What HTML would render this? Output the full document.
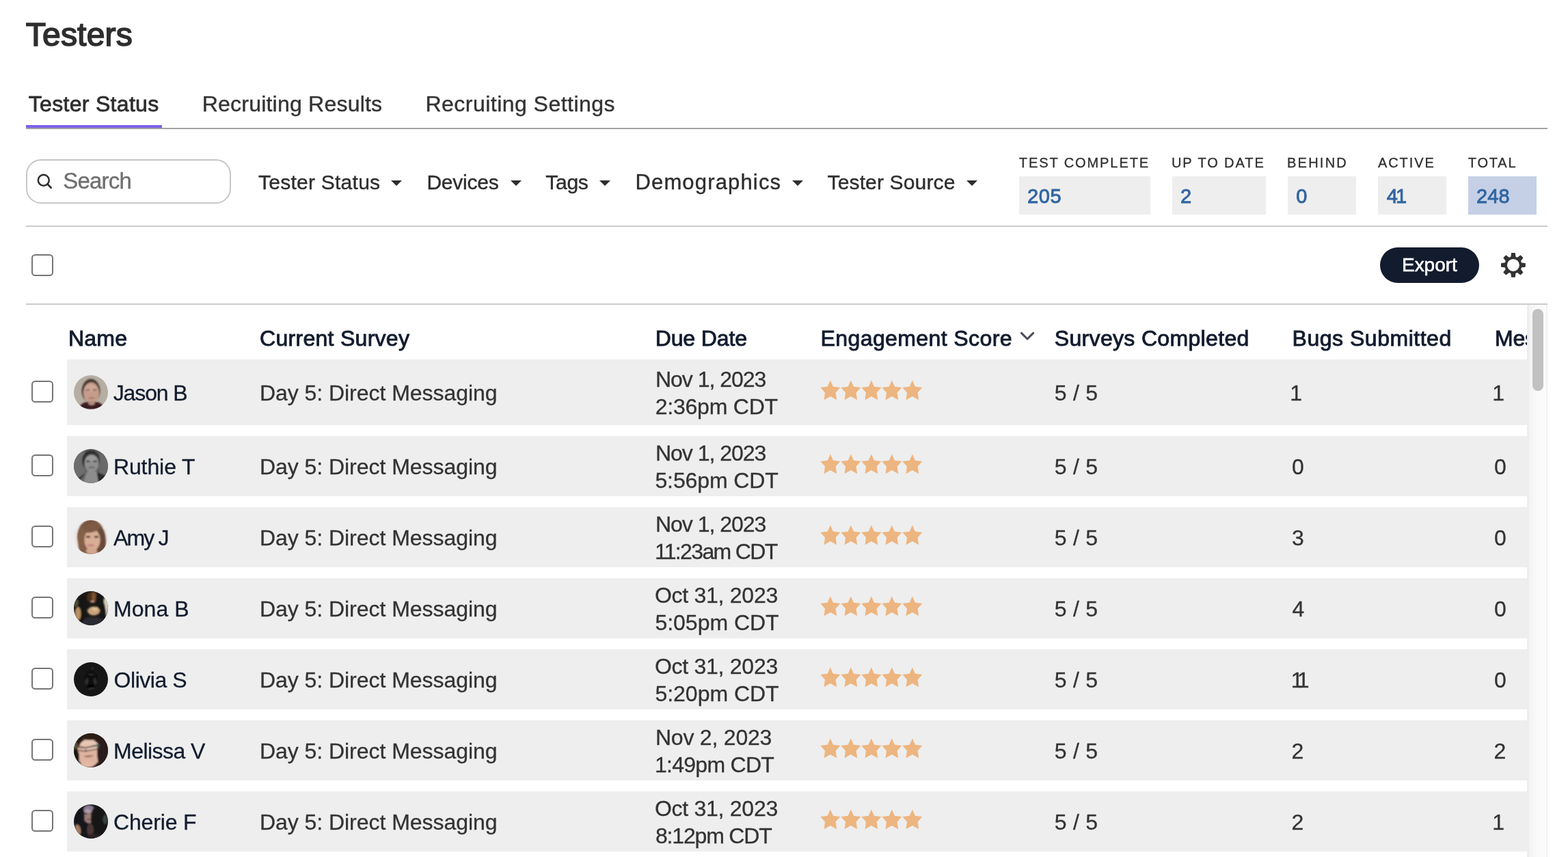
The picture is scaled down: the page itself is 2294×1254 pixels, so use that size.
<!DOCTYPE html>
<html lang="en">
<head>
<meta charset="utf-8">
<title>Testers</title>
<style>
html,body{margin:0;padding:0;background:#fff;}
body{width:2294px;height:1254px;overflow:hidden;position:relative;font-family:'Liberation Sans',sans-serif;}
.t{position:absolute;white-space:pre;line-height:1;font-kerning:normal;}
.a{position:absolute;}
.row{position:absolute;left:98px;width:2136px;background:#eeeeee;}
.cb{position:absolute;left:46px;width:28px;height:28px;border:2px solid #767676;border-radius:5.5px;background:#fff;}
.caret{position:absolute;width:0;height:0;border-left:8px solid transparent;border-right:8px solid transparent;border-top:8.5px solid #2e2e2e;}
.stat{position:absolute;top:258px;height:56px;background:#eeeeee;}
.av{position:absolute;left:108px;width:50px;height:50px;}
.avs{display:block;}
.stars{position:absolute;left:1200px;}
</style>
</head>
<body>
<div id="page" style="position:absolute;left:0;top:0;width:2294px;height:1254px;overflow:hidden;will-change:transform">

<div class="a" style="left:38px;top:187px;width:2226px;height:2px;background:#a3a3a3"></div>
<div class="a" style="left:38px;top:183px;width:199px;height:4px;background:#7c62e8"></div>
<div class="a" style="left:38px;top:330px;width:2226px;height:2px;background:#cccccc"></div>
<div class="a" style="left:38px;top:444px;width:2226px;height:2px;background:#cccccc"></div>
<div class="a" style="left:38px;top:233px;width:296px;height:61px;border:2px solid #c6c6c6;border-radius:22px;background:#fff"></div>
<svg class="a" style="left:52.6px;top:253.1px" width="25" height="25" viewBox="0 0 26 26"><circle cx="11.2" cy="11.2" r="8.3" fill="none" stroke="#2e2e2e" stroke-width="2.6"/><path d="M17.2 17.2 L22.6 22.6" stroke="#2e2e2e" stroke-width="2.8" stroke-linecap="round"/></svg>
<div class="caret" style="left:572px;top:263.5px"></div>
<div class="caret" style="left:747px;top:263.5px"></div>
<div class="caret" style="left:877px;top:263.5px"></div>
<div class="caret" style="left:1159px;top:263.5px"></div>
<div class="caret" style="left:1414px;top:263.5px"></div>
<div class="stat" style="left:1491px;width:192px;background:#eeeeee"></div>
<div class="stat" style="left:1715px;width:137px;background:#eeeeee"></div>
<div class="stat" style="left:1884px;width:100px;background:#eeeeee"></div>
<div class="stat" style="left:2016px;width:100px;background:#eeeeee"></div>
<div class="stat" style="left:2148px;width:100px;background:#c5d0e6"></div>
<div class="cb" style="top:372px"></div>
<div class="a" style="left:2019px;top:362px;width:145px;height:52px;border-radius:26px;background:#131c2e"></div>
<svg class="a" style="left:2194px;top:368px" width="40" height="40" viewBox="-20 -20 40 40"><g transform="translate(-0.1 -0.1)" fill="#333"><path transform="rotate(0)" d="M-3.7 -11 L-2.9 -17.3 Q-2.8 -17.9 -2.2 -17.9 L2.2 -17.9 Q2.8 -17.9 2.9 -17.3 L3.7 -11 Z"/><path transform="rotate(45)" d="M-3.7 -11 L-2.9 -17.3 Q-2.8 -17.9 -2.2 -17.9 L2.2 -17.9 Q2.8 -17.9 2.9 -17.3 L3.7 -11 Z"/><path transform="rotate(90)" d="M-3.7 -11 L-2.9 -17.3 Q-2.8 -17.9 -2.2 -17.9 L2.2 -17.9 Q2.8 -17.9 2.9 -17.3 L3.7 -11 Z"/><path transform="rotate(135)" d="M-3.7 -11 L-2.9 -17.3 Q-2.8 -17.9 -2.2 -17.9 L2.2 -17.9 Q2.8 -17.9 2.9 -17.3 L3.7 -11 Z"/><path transform="rotate(180)" d="M-3.7 -11 L-2.9 -17.3 Q-2.8 -17.9 -2.2 -17.9 L2.2 -17.9 Q2.8 -17.9 2.9 -17.3 L3.7 -11 Z"/><path transform="rotate(225)" d="M-3.7 -11 L-2.9 -17.3 Q-2.8 -17.9 -2.2 -17.9 L2.2 -17.9 Q2.8 -17.9 2.9 -17.3 L3.7 -11 Z"/><path transform="rotate(270)" d="M-3.7 -11 L-2.9 -17.3 Q-2.8 -17.9 -2.2 -17.9 L2.2 -17.9 Q2.8 -17.9 2.9 -17.3 L3.7 -11 Z"/><path transform="rotate(315)" d="M-3.7 -11 L-2.9 -17.3 Q-2.8 -17.9 -2.2 -17.9 L2.2 -17.9 Q2.8 -17.9 2.9 -17.3 L3.7 -11 Z"/><circle r="10.8" fill="none" stroke="#333" stroke-width="3.6"/></g></svg>
<svg class="a" style="left:1491px;top:483px" width="24" height="18" viewBox="0 0 24 18"><path d="M3.4 4.4 L12 13 L20.6 4.4" fill="none" stroke="#4b4d55" stroke-width="3" stroke-linecap="round" stroke-linejoin="round"/></svg>
<svg width="0" height="0" style="position:absolute"><defs><polygon id="st" points="0,0 4.1,9.1 14.5,10.4 7.8,17.9 9.3,28.6 0,23.5 -9.3,28.6 -7.8,17.9 -14.5,10.4 -4.1,9.1"/></defs></svg>
<div class="row" style="top:526px;height:96px"></div>
<div class="cb" style="top:557px"></div>
<div class="av" style="top:549px"><svg class="avs" viewBox="0 0 50 50" width="50" height="50"><defs><clipPath id="c1"><circle cx="25" cy="25" r="25"/></clipPath><filter id="f1" x="-20%" y="-20%" width="140%" height="140%"><feGaussianBlur stdDeviation="1.3"/></filter></defs><g clip-path="url(#c1)"><rect width="50" height="50" fill="#b7aea3"/><g filter="url(#f1)"><ellipse cx="25" cy="23" rx="13.5" ry="17.5" fill="#4a3a32"/><ellipse cx="25.5" cy="26" rx="11.5" ry="15.5" fill="#c49d8c"/><ellipse cx="25" cy="19" rx="9" ry="5" fill="#cfa896"/><ellipse cx="20.5" cy="21.5" rx="3" ry="1.2" fill="#8a6a5e"/><ellipse cx="30.5" cy="21.5" rx="3" ry="1.2" fill="#8a6a5e"/><ellipse cx="26" cy="33.5" rx="5" ry="1.3" fill="#a87a70"/><path d="M6 50 Q10 40 20 39 L32 39 Q42 40 46 50 Z" fill="#3a1c20"/><ellipse cx="26" cy="41" rx="5" ry="3" fill="#b58c7c"/></g></g></svg></div>
<svg class="stars" style="top:556px" width="152" height="32" viewBox="0 0 152 32"><use href="#st" x="14.8" y="0.6" fill="#edb57f"/><use href="#st" x="44.8" y="0.6" fill="#edb57f"/><use href="#st" x="74.8" y="0.6" fill="#edb57f"/><use href="#st" x="104.8" y="0.6" fill="#edb57f"/><use href="#st" x="134.8" y="0.6" fill="#edb57f"/></svg>
<div class="row" style="top:638px;height:88px"></div>
<div class="cb" style="top:665px"></div>
<div class="av" style="top:657px"><svg class="avs" viewBox="0 0 50 50" width="50" height="50"><defs><clipPath id="c2"><circle cx="25" cy="25" r="25"/></clipPath><filter id="f2" x="-20%" y="-20%" width="140%" height="140%"><feGaussianBlur stdDeviation="1.3"/></filter></defs><g clip-path="url(#c2)"><rect width="50" height="50" fill="#5f5f5f"/><g filter="url(#f2)"><ellipse cx="8" cy="20" rx="10" ry="22" fill="#6e6e6e"/><ellipse cx="45" cy="22" rx="8" ry="22" fill="#6a6a6a"/><ellipse cx="25" cy="17" rx="13" ry="15" fill="#2e2e2e"/><ellipse cx="26" cy="21" rx="10.5" ry="13" fill="#8f8f8f"/><ellipse cx="26" cy="14" rx="8" ry="4" fill="#9a9a9a"/><ellipse cx="21" cy="18" rx="3" ry="1.2" fill="#3c3c3c"/><ellipse cx="31" cy="18" rx="3" ry="1.2" fill="#3c3c3c"/><ellipse cx="26" cy="27" rx="5" ry="1.2" fill="#666"/><path d="M14 50 L19 33 L33 33 L37 50 Z" fill="#8c8c8c"/><path d="M0 42 L17 34 L15 50 L0 50 Z" fill="#6a6a6a"/><path d="M5 44 L16 36 L14 40 L6 48 Z" fill="#2c2c2c"/><path d="M34 34 L50 40 L50 50 L36 50 Z" fill="#2a2a2a"/></g></g></svg></div>
<svg class="stars" style="top:664px" width="152" height="32" viewBox="0 0 152 32"><use href="#st" x="14.8" y="0.6" fill="#edb57f"/><use href="#st" x="44.8" y="0.6" fill="#edb57f"/><use href="#st" x="74.8" y="0.6" fill="#edb57f"/><use href="#st" x="104.8" y="0.6" fill="#edb57f"/><use href="#st" x="134.8" y="0.6" fill="#edb57f"/></svg>
<div class="row" style="top:742px;height:88px"></div>
<div class="cb" style="top:769px"></div>
<div class="av" style="top:761px"><svg class="avs" viewBox="0 0 50 50" width="50" height="50"><defs><clipPath id="c3"><circle cx="25" cy="25" r="25"/></clipPath><filter id="f3" x="-20%" y="-20%" width="140%" height="140%"><feGaussianBlur stdDeviation="1.3"/></filter></defs><g clip-path="url(#c3)"><rect width="50" height="50" fill="#ece6e4"/><g filter="url(#f3)"><ellipse cx="25" cy="25" rx="20" ry="26" fill="#76543f"/><ellipse cx="14" cy="31" rx="8" ry="21" fill="#85614a"/><ellipse cx="40" cy="32" rx="7" ry="20" fill="#6a4a3a"/><ellipse cx="27" cy="29" rx="11.5" ry="16" fill="#d8ae96"/><ellipse cx="26" cy="11" rx="13" ry="7" fill="#7e5a44" transform="rotate(-15 26 11)"/><ellipse cx="21" cy="24.5" rx="3.2" ry="1.5" fill="#4a3228"/><ellipse cx="33" cy="24.5" rx="3.2" ry="1.5" fill="#4a3228"/><ellipse cx="25" cy="37" rx="5.5" ry="2" fill="#c98a84"/><ellipse cx="26" cy="45" rx="8" ry="5" fill="#d3a68e"/></g></g></svg></div>
<svg class="stars" style="top:768px" width="152" height="32" viewBox="0 0 152 32"><use href="#st" x="14.8" y="0.6" fill="#edb57f"/><use href="#st" x="44.8" y="0.6" fill="#edb57f"/><use href="#st" x="74.8" y="0.6" fill="#edb57f"/><use href="#st" x="104.8" y="0.6" fill="#edb57f"/><use href="#st" x="134.8" y="0.6" fill="#edb57f"/></svg>
<div class="row" style="top:846px;height:88px"></div>
<div class="cb" style="top:873px"></div>
<div class="av" style="top:865px"><svg class="avs" viewBox="0 0 50 50" width="50" height="50"><defs><clipPath id="c4"><circle cx="25" cy="25" r="25"/></clipPath><filter id="f4" x="-20%" y="-20%" width="140%" height="140%"><feGaussianBlur stdDeviation="1.3"/></filter></defs><g clip-path="url(#c4)"><rect width="50" height="50" fill="#1b1917"/><g filter="url(#f4)"><ellipse cx="47" cy="22" rx="4" ry="14" fill="#d6d2be"/><ellipse cx="3" cy="17" rx="4" ry="6" fill="#4e4e36"/><ellipse cx="27" cy="9" rx="8" ry="9" fill="#4a2e1c"/><ellipse cx="29" cy="8" rx="3" ry="7" fill="#7a5232"/><ellipse cx="27.5" cy="15" rx="3" ry="1.3" fill="#c9988c"/><ellipse cx="11" cy="28" rx="7" ry="19" fill="#121212" transform="rotate(15 11 28)"/><ellipse cx="40" cy="24" rx="6" ry="21" fill="#121212" transform="rotate(-12 40 24)"/><ellipse cx="29" cy="29" rx="9" ry="6.5" fill="#c8a47a"/><ellipse cx="31" cy="26" rx="4.5" ry="3" fill="#dcbc90"/><ellipse cx="6" cy="33" rx="4.5" ry="10" fill="#b8905e"/><path d="M10 50 Q14 37 26 38.5 Q40 37 44 43 L44 50 Z" fill="#2a2b31"/></g></g></svg></div>
<svg class="stars" style="top:872px" width="152" height="32" viewBox="0 0 152 32"><use href="#st" x="14.8" y="0.6" fill="#edb57f"/><use href="#st" x="44.8" y="0.6" fill="#edb57f"/><use href="#st" x="74.8" y="0.6" fill="#edb57f"/><use href="#st" x="104.8" y="0.6" fill="#edb57f"/><use href="#st" x="134.8" y="0.6" fill="#edb57f"/></svg>
<div class="row" style="top:950px;height:88px"></div>
<div class="cb" style="top:977px"></div>
<div class="av" style="top:969px"><svg class="avs" viewBox="0 0 50 50" width="50" height="50"><defs><clipPath id="c5"><circle cx="25" cy="25" r="25"/></clipPath><filter id="f5" x="-20%" y="-20%" width="140%" height="140%"><feGaussianBlur stdDeviation="0.8"/></filter></defs><g clip-path="url(#c5)"><rect width="50" height="50" fill="#161616"/><g filter="url(#f5)"><ellipse cx="25" cy="26" rx="9" ry="13" fill="#0a0a0a"/><ellipse cx="19" cy="28" rx="2" ry="5" fill="#3a3a3a" transform="rotate(10 19 28)" opacity="0.8"/><ellipse cx="31" cy="28" rx="2" ry="5" fill="#3a3a3a" transform="rotate(-10 31 28)" opacity="0.8"/><ellipse cx="25" cy="18" rx="4" ry="1.2" fill="#2e2e2e"/><ellipse cx="25" cy="36" rx="5" ry="3" fill="#000"/><ellipse cx="26" cy="38.5" rx="5" ry="1" fill="#3a3a3a" transform="rotate(-8 26 38.5)"/><ellipse cx="27" cy="9" rx="2" ry="1.5" fill="#333"/></g></g></svg></div>
<svg class="stars" style="top:976px" width="152" height="32" viewBox="0 0 152 32"><use href="#st" x="14.8" y="0.6" fill="#edb57f"/><use href="#st" x="44.8" y="0.6" fill="#edb57f"/><use href="#st" x="74.8" y="0.6" fill="#edb57f"/><use href="#st" x="104.8" y="0.6" fill="#edb57f"/><use href="#st" x="134.8" y="0.6" fill="#edb57f"/></svg>
<div class="row" style="top:1054px;height:88px"></div>
<div class="cb" style="top:1081px"></div>
<div class="av" style="top:1073px"><svg class="avs" viewBox="0 0 50 50" width="50" height="50"><defs><clipPath id="c6"><circle cx="25" cy="25" r="25"/></clipPath><filter id="f6" x="-20%" y="-20%" width="140%" height="140%"><feGaussianBlur stdDeviation="1.0"/></filter></defs><g clip-path="url(#c6)"><rect width="50" height="50" fill="#2a1a18"/><g filter="url(#f6)"><ellipse cx="2" cy="20" rx="4" ry="9" fill="#5a5238"/><ellipse cx="22" cy="29" rx="17" ry="21" fill="#deb4a1"/><ellipse cx="22" cy="17" rx="13" ry="8" fill="#e8c6b4"/><ellipse cx="43" cy="27" rx="9" ry="26" fill="#2c1c1a"/><ellipse cx="24" cy="4" rx="18" ry="6" fill="#2a1a18"/><ellipse cx="3" cy="36" rx="5" ry="14" fill="#1c1210"/><path d="M6 18.6 L17 20.2 L28 18 L37.5 16 L37.5 17.8 L28 19.8 L17 22 L6 20.4 Z" fill="#3a2c28"/><path d="M7 24.3 L16 25.4 L17.5 23 L19 25 L34 22.4 L34 23.8 L19 26.6 L16 26.8 L7 25.7 Z" fill="#4a3a36"/><path d="M28 17.6 L37.5 15.8 L37.5 18 L36 22.6 L34.6 22.4 L35.6 18.6 L28 20 Z" fill="#3c5c54"/><ellipse cx="22" cy="33.6" rx="7" ry="1.1" fill="#8a5a52" transform="rotate(-3 22 33.6)"/><ellipse cx="20" cy="45" rx="10" ry="5" fill="#e2b8a4"/></g></g></svg></div>
<svg class="stars" style="top:1080px" width="152" height="32" viewBox="0 0 152 32"><use href="#st" x="14.8" y="0.6" fill="#edb57f"/><use href="#st" x="44.8" y="0.6" fill="#edb57f"/><use href="#st" x="74.8" y="0.6" fill="#edb57f"/><use href="#st" x="104.8" y="0.6" fill="#edb57f"/><use href="#st" x="134.8" y="0.6" fill="#edb57f"/></svg>
<div class="row" style="top:1158px;height:88px"></div>
<div class="cb" style="top:1185px"></div>
<div class="av" style="top:1177px"><svg class="avs" viewBox="0 0 50 50" width="50" height="50"><defs><clipPath id="c7"><circle cx="25" cy="25" r="25"/></clipPath><filter id="f7" x="-20%" y="-20%" width="140%" height="140%"><feGaussianBlur stdDeviation="1.3"/></filter></defs><g clip-path="url(#c7)"><rect width="50" height="50" fill="#16161b"/><g filter="url(#f7)"><ellipse cx="22" cy="7" rx="8" ry="6" fill="#8c7c90"/><ellipse cx="22" cy="18" rx="7.5" ry="10" fill="#9c7e7c"/><ellipse cx="20" cy="10" rx="5" ry="3" fill="#ad9cae"/><ellipse cx="18" cy="13.5" rx="2.5" ry="1" fill="#3a3038"/><ellipse cx="26" cy="13.5" rx="2.5" ry="1" fill="#3a3038"/><ellipse cx="22" cy="22" rx="3.5" ry="1" fill="#7a4a4a"/><ellipse cx="10" cy="27" rx="5" ry="20" fill="#19151a" transform="rotate(8 10 27)"/><ellipse cx="36" cy="26" rx="11" ry="24" fill="#141419" transform="rotate(-6 36 26)"/><ellipse cx="46" cy="22" rx="3.5" ry="7" fill="#38443c"/><ellipse cx="6" cy="37" rx="4" ry="8" fill="#a67c64" transform="rotate(-15 6 37)"/><ellipse cx="24" cy="37" rx="5" ry="9" fill="#4e3834"/><ellipse cx="30" cy="47" rx="10" ry="4" fill="#2c2022"/></g></g></svg></div>
<svg class="stars" style="top:1184px" width="152" height="32" viewBox="0 0 152 32"><use href="#st" x="14.8" y="0.6" fill="#edb57f"/><use href="#st" x="44.8" y="0.6" fill="#edb57f"/><use href="#st" x="74.8" y="0.6" fill="#edb57f"/><use href="#st" x="104.8" y="0.6" fill="#edb57f"/><use href="#st" x="134.8" y="0.6" fill="#edb57f"/></svg>
<div class="a" style="left:2180px;top:470px;width:54px;height:50px;overflow:hidden"><div class="t" style="left:7px;top:9.00px;font-size:32px;color:#131c2e;-webkit-text-stroke:0.9px #131c2e;letter-spacing:-0.2px">Messages Sent</div></div>
<div class="t" style="left:37.75px;top:27.00px;font-size:48px;color:#2e2e2e;letter-spacing:0.22px;-webkit-text-stroke:1.7px #2e2e2e;">Testers</div>
<div class="t" style="left:41.75px;top:136.00px;font-size:32px;color:#2e2e2e;letter-spacing:0.31px;-webkit-text-stroke:0.8px #2e2e2e;">Tester Status</div>
<div class="t" style="left:295.70px;top:136.00px;font-size:32px;color:#333;letter-spacing:0.22px;-webkit-text-stroke:0.4px #333;">Recruiting Results</div>
<div class="t" style="left:622.50px;top:136.00px;font-size:32px;color:#333;letter-spacing:0.47px;-webkit-text-stroke:0.4px #333;">Recruiting Settings</div>
<div class="t" style="left:92.15px;top:248.00px;font-size:33px;color:#707070;letter-spacing:-0.77px;-webkit-text-stroke:0.4px #707070;">Search</div>
<div class="t" style="left:378.00px;top:252.00px;font-size:30px;color:#2e2e2e;letter-spacing:0.25px;-webkit-text-stroke:0.4px #2e2e2e;">Tester Status</div>
<div class="t" style="left:624.45px;top:252.00px;font-size:30px;color:#2e2e2e;letter-spacing:-0.23px;-webkit-text-stroke:0.4px #2e2e2e;">Devices</div>
<div class="t" style="left:798.25px;top:252.00px;font-size:30px;color:#2e2e2e;letter-spacing:-0.25px;-webkit-text-stroke:0.4px #2e2e2e;">Tags</div>
<div class="t" style="left:929.45px;top:251.00px;font-size:31px;color:#2e2e2e;letter-spacing:1.16px;-webkit-text-stroke:0.4px #2e2e2e;">Demographics</div>
<div class="t" style="left:1210.50px;top:252.00px;font-size:30px;color:#2e2e2e;letter-spacing:0.15px;-webkit-text-stroke:0.4px #2e2e2e;">Tester Source</div>
<div class="t" style="left:1490.75px;top:228.00px;font-size:20px;color:#2e2e2e;letter-spacing:1.92px;-webkit-text-stroke:0.3px #2e2e2e;">TEST COMPLETE</div>
<div class="t" style="left:1714.00px;top:228.00px;font-size:20px;color:#2e2e2e;letter-spacing:1.92px;-webkit-text-stroke:0.3px #2e2e2e;">UP TO DATE</div>
<div class="t" style="left:1883.00px;top:228.00px;font-size:20px;color:#2e2e2e;letter-spacing:2.25px;-webkit-text-stroke:0.3px #2e2e2e;">BEHIND</div>
<div class="t" style="left:2016.00px;top:228.00px;font-size:20px;color:#2e2e2e;letter-spacing:1.90px;-webkit-text-stroke:0.3px #2e2e2e;">ACTIVE</div>
<div class="t" style="left:2147.75px;top:228.00px;font-size:20px;color:#2e2e2e;letter-spacing:1.81px;-webkit-text-stroke:0.3px #2e2e2e;">TOTAL</div>
<div class="t" style="left:1503.00px;top:273.00px;font-size:29px;color:#3166a3;letter-spacing:0.65px;-webkit-text-stroke:0.9px #3166a3;">205</div>
<div class="t" style="left:1727.00px;top:273.00px;font-size:29px;color:#3166a3;-webkit-text-stroke:0.9px #3166a3;">2</div>
<div class="t" style="left:1896.25px;top:273.00px;font-size:29px;color:#3166a3;-webkit-text-stroke:0.9px #3166a3;">0</div>
<div class="t" style="left:2028.75px;top:273.00px;font-size:29px;color:#3166a3;letter-spacing:-3.00px;-webkit-text-stroke:0.9px #3166a3;">41</div>
<div class="t" style="left:2160.00px;top:273.00px;font-size:29px;color:#3166a3;letter-spacing:0.15px;-webkit-text-stroke:0.9px #3166a3;">248</div>
<div class="t" style="left:2051.00px;top:374.00px;font-size:28px;color:#ffffff;letter-spacing:-0.04px;-webkit-text-stroke:0.6px #ffffff;">Export</div>
<div class="t" style="left:100.05px;top:479.00px;font-size:32px;color:#131c2e;letter-spacing:0.18px;-webkit-text-stroke:0.9px #131c2e;">Name</div>
<div class="t" style="left:380.10px;top:479.00px;font-size:32px;color:#131c2e;letter-spacing:0.28px;-webkit-text-stroke:0.9px #131c2e;">Current Survey</div>
<div class="t" style="left:958.65px;top:479.00px;font-size:32px;color:#131c2e;letter-spacing:-0.10px;-webkit-text-stroke:0.9px #131c2e;">Due Date</div>
<div class="t" style="left:1200.55px;top:479.00px;font-size:32px;color:#131c2e;letter-spacing:0.40px;-webkit-text-stroke:0.9px #131c2e;">Engagement Score</div>
<div class="t" style="left:1542.80px;top:479.00px;font-size:32px;color:#131c2e;letter-spacing:0.33px;-webkit-text-stroke:0.9px #131c2e;">Surveys Completed</div>
<div class="t" style="left:1890.55px;top:479.00px;font-size:32px;color:#131c2e;letter-spacing:0.52px;-webkit-text-stroke:0.9px #131c2e;">Bugs Submitted</div>
<div class="t" style="left:165.75px;top:559.00px;font-size:32px;color:#131c2e;letter-spacing:-1.14px;-webkit-text-stroke:0.3px #131c2e;">Jason B</div>
<div class="t" style="left:379.90px;top:559.00px;font-size:32px;color:#333333;letter-spacing:-0.04px;-webkit-text-stroke:0.3px #333333;">Day 5: Direct Messaging</div>
<div class="t" style="left:958.90px;top:539.00px;font-size:32px;color:#333333;letter-spacing:-1.01px;-webkit-text-stroke:0.3px #333333;">Nov 1, 2023</div>
<div class="t" style="left:958.70px;top:579.00px;font-size:32px;color:#333333;letter-spacing:-0.22px;-webkit-text-stroke:0.3px #333333;">2:36pm CDT</div>
<div class="t" style="left:1542.85px;top:559.00px;font-size:32px;color:#333333;letter-spacing:0.24px;-webkit-text-stroke:0.3px #333333;">5 / 5</div>
<div class="t" style="left:1887.25px;top:559.00px;font-size:32px;color:#333333;-webkit-text-stroke:0.3px #333333;">1</div>
<div class="t" style="left:2183.25px;top:559.00px;font-size:32px;color:#333333;-webkit-text-stroke:0.3px #333333;">1</div>
<div class="t" style="left:165.90px;top:667.00px;font-size:32px;color:#131c2e;letter-spacing:-0.09px;-webkit-text-stroke:0.3px #131c2e;">Ruthie T</div>
<div class="t" style="left:379.90px;top:667.00px;font-size:32px;color:#333333;letter-spacing:-0.04px;-webkit-text-stroke:0.3px #333333;">Day 5: Direct Messaging</div>
<div class="t" style="left:958.90px;top:647.00px;font-size:32px;color:#333333;letter-spacing:-1.01px;-webkit-text-stroke:0.3px #333333;">Nov 1, 2023</div>
<div class="t" style="left:958.45px;top:687.00px;font-size:32px;color:#333333;letter-spacing:-0.11px;-webkit-text-stroke:0.3px #333333;">5:56pm CDT</div>
<div class="t" style="left:1542.85px;top:667.00px;font-size:32px;color:#333333;letter-spacing:0.24px;-webkit-text-stroke:0.3px #333333;">5 / 5</div>
<div class="t" style="left:1890.00px;top:667.00px;font-size:32px;color:#333333;-webkit-text-stroke:0.3px #333333;">0</div>
<div class="t" style="left:2186.00px;top:667.00px;font-size:32px;color:#333333;-webkit-text-stroke:0.3px #333333;">0</div>
<div class="t" style="left:166.00px;top:771.00px;font-size:32px;color:#131c2e;letter-spacing:-1.86px;-webkit-text-stroke:0.3px #131c2e;">Amy J</div>
<div class="t" style="left:379.90px;top:771.00px;font-size:32px;color:#333333;letter-spacing:-0.04px;-webkit-text-stroke:0.3px #333333;">Day 5: Direct Messaging</div>
<div class="t" style="left:958.90px;top:751.00px;font-size:32px;color:#333333;letter-spacing:-1.01px;-webkit-text-stroke:0.3px #333333;">Nov 1, 2023</div>
<div class="t" style="left:957.95px;top:791.00px;font-size:32px;color:#333333;letter-spacing:-1.65px;-webkit-text-stroke:0.3px #333333;">11:23am CDT</div>
<div class="t" style="left:1542.85px;top:771.00px;font-size:32px;color:#333333;letter-spacing:0.24px;-webkit-text-stroke:0.3px #333333;">5 / 5</div>
<div class="t" style="left:1890.00px;top:771.00px;font-size:32px;color:#333333;-webkit-text-stroke:0.3px #333333;">3</div>
<div class="t" style="left:2186.00px;top:771.00px;font-size:32px;color:#333333;-webkit-text-stroke:0.3px #333333;">0</div>
<div class="t" style="left:166.10px;top:875.00px;font-size:32px;color:#131c2e;letter-spacing:0.03px;-webkit-text-stroke:0.3px #131c2e;">Mona B</div>
<div class="t" style="left:379.90px;top:875.00px;font-size:32px;color:#333333;letter-spacing:-0.04px;-webkit-text-stroke:0.3px #333333;">Day 5: Direct Messaging</div>
<div class="t" style="left:957.95px;top:855.00px;font-size:32px;color:#333333;letter-spacing:-0.27px;-webkit-text-stroke:0.3px #333333;">Oct 31, 2023</div>
<div class="t" style="left:958.45px;top:895.00px;font-size:32px;color:#333333;letter-spacing:-0.02px;-webkit-text-stroke:0.3px #333333;">5:05pm CDT</div>
<div class="t" style="left:1542.85px;top:875.00px;font-size:32px;color:#333333;letter-spacing:0.24px;-webkit-text-stroke:0.3px #333333;">5 / 5</div>
<div class="t" style="left:1890.50px;top:875.00px;font-size:32px;color:#333333;-webkit-text-stroke:0.3px #333333;">4</div>
<div class="t" style="left:2186.00px;top:875.00px;font-size:32px;color:#333333;-webkit-text-stroke:0.3px #333333;">0</div>
<div class="t" style="left:166.55px;top:979.00px;font-size:32px;color:#131c2e;letter-spacing:-0.45px;-webkit-text-stroke:0.3px #131c2e;">Olivia S</div>
<div class="t" style="left:379.90px;top:979.00px;font-size:32px;color:#333333;letter-spacing:-0.04px;-webkit-text-stroke:0.3px #333333;">Day 5: Direct Messaging</div>
<div class="t" style="left:957.95px;top:959.00px;font-size:32px;color:#333333;letter-spacing:-0.27px;-webkit-text-stroke:0.3px #333333;">Oct 31, 2023</div>
<div class="t" style="left:958.45px;top:999.00px;font-size:32px;color:#333333;letter-spacing:-0.02px;-webkit-text-stroke:0.3px #333333;">5:20pm CDT</div>
<div class="t" style="left:1542.85px;top:979.00px;font-size:32px;color:#333333;letter-spacing:0.24px;-webkit-text-stroke:0.3px #333333;">5 / 5</div>
<div class="t" style="left:1888.75px;top:979.00px;font-size:32px;color:#333333;letter-spacing:-6.50px;-webkit-text-stroke:0.3px #333333;">11</div>
<div class="t" style="left:2186.00px;top:979.00px;font-size:32px;color:#333333;-webkit-text-stroke:0.3px #333333;">0</div>
<div class="t" style="left:166.10px;top:1083.00px;font-size:32px;color:#131c2e;letter-spacing:-0.56px;-webkit-text-stroke:0.3px #131c2e;">Melissa V</div>
<div class="t" style="left:379.90px;top:1083.00px;font-size:32px;color:#333333;letter-spacing:-0.04px;-webkit-text-stroke:0.3px #333333;">Day 5: Direct Messaging</div>
<div class="t" style="left:958.90px;top:1063.00px;font-size:32px;color:#333333;letter-spacing:-0.21px;-webkit-text-stroke:0.3px #333333;">Nov 2, 2023</div>
<div class="t" style="left:957.95px;top:1103.00px;font-size:32px;color:#333333;letter-spacing:-0.72px;-webkit-text-stroke:0.3px #333333;">1:49pm CDT</div>
<div class="t" style="left:1542.85px;top:1083.00px;font-size:32px;color:#333333;letter-spacing:0.24px;-webkit-text-stroke:0.3px #333333;">5 / 5</div>
<div class="t" style="left:1889.50px;top:1083.00px;font-size:32px;color:#333333;-webkit-text-stroke:0.3px #333333;">2</div>
<div class="t" style="left:2185.50px;top:1083.00px;font-size:32px;color:#333333;-webkit-text-stroke:0.3px #333333;">2</div>
<div class="t" style="left:166.00px;top:1187.00px;font-size:32px;color:#131c2e;letter-spacing:-0.16px;-webkit-text-stroke:0.3px #131c2e;">Cherie F</div>
<div class="t" style="left:379.90px;top:1187.00px;font-size:32px;color:#333333;letter-spacing:-0.04px;-webkit-text-stroke:0.3px #333333;">Day 5: Direct Messaging</div>
<div class="t" style="left:957.95px;top:1167.00px;font-size:32px;color:#333333;letter-spacing:-0.27px;-webkit-text-stroke:0.3px #333333;">Oct 31, 2023</div>
<div class="t" style="left:958.95px;top:1207.00px;font-size:32px;color:#333333;letter-spacing:-1.17px;-webkit-text-stroke:0.3px #333333;">8:12pm CDT</div>
<div class="t" style="left:1542.85px;top:1187.00px;font-size:32px;color:#333333;letter-spacing:0.24px;-webkit-text-stroke:0.3px #333333;">5 / 5</div>
<div class="t" style="left:1889.50px;top:1187.00px;font-size:32px;color:#333333;-webkit-text-stroke:0.3px #333333;">2</div>
<div class="t" style="left:2183.25px;top:1187.00px;font-size:32px;color:#333333;-webkit-text-stroke:0.3px #333333;">1</div>
<div class="a" style="left:2234px;top:446px;width:30px;height:808px;background:linear-gradient(90deg,#f1f1f1 0,#e9e9e9 2px,#f3f3f3 3px,#fafafa 16px,#fbfbfb 28px,#ebebeb 29px,#f3f3f3 30px)"></div>
<div class="a" style="left:2242px;top:452px;width:16px;height:120px;border-radius:8px;background:#c1c1c1"></div>
</div>
</body></html>
